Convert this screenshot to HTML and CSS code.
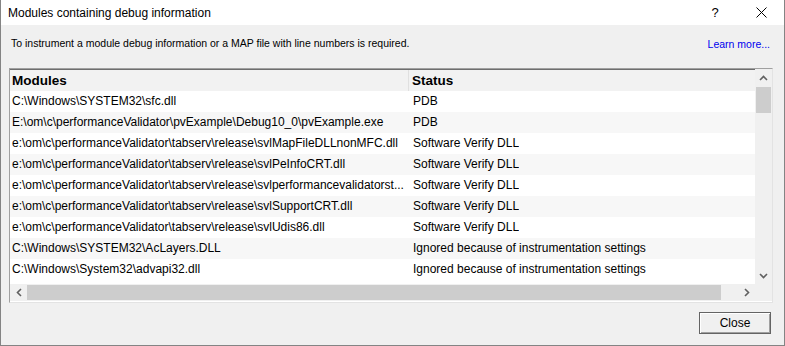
FILE: index.html
```html
<!DOCTYPE html>
<html>
<head>
    <title>Modules containing debug information</title>
    <meta charset="UTF-8">
    <link rel="stylesheet" href="styles.css">
</head>
<body>
    <div class="dialog">
        <div class="titlebar">
            <span class="title">Modules containing debug information</span>
            <div class="caption-buttons">
                <span class="caption-btn">?</span>
                <span class="caption-btn">
                    <svg width="11" height="11" viewBox="0 0 11 11"><path d="M0.5 0.5 L10.5 10.5 M10.5 0.5 L0.5 10.5" stroke="#000" stroke-width="1" fill="none"/></svg>
                </span>
            </div>
        </div>

        <div class="content">
            <div class="intro">
                <span>To instrument a module debug information or a MAP file with line numbers is required.</span>
                <a class="learn-more" href="#">Learn more...</a>
            </div>

            <div class="listview">
                <div class="list-main">
                    <div class="list-header">
                        <div class="cell col-module">Modules</div>
                        <div class="cell col-status">Status</div>
                    </div>
                    <div class="row">
                        <div class="cell col-module">C:\Windows\SYSTEM32\sfc.dll</div>
                        <div class="cell col-status">PDB</div>
                    </div>
                    <div class="row">
                        <div class="cell col-module">E:\om\c\performanceValidator\pvExample\Debug10_0\pvExample.exe</div>
                        <div class="cell col-status">PDB</div>
                    </div>
                    <div class="row">
                        <div class="cell col-module">e:\om\c\performanceValidator\tabserv\release\svlMapFileDLLnonMFC.dll</div>
                        <div class="cell col-status">Software Verify DLL</div>
                    </div>
                    <div class="row">
                        <div class="cell col-module">e:\om\c\performanceValidator\tabserv\release\svlPeInfoCRT.dll</div>
                        <div class="cell col-status">Software Verify DLL</div>
                    </div>
                    <div class="row">
                        <div class="cell col-module">e:\om\c\performanceValidator\tabserv\release\svlperformancevalidatorst...</div>
                        <div class="cell col-status">Software Verify DLL</div>
                    </div>
                    <div class="row">
                        <div class="cell col-module">e:\om\c\performanceValidator\tabserv\release\svlSupportCRT.dll</div>
                        <div class="cell col-status">Software Verify DLL</div>
                    </div>
                    <div class="row">
                        <div class="cell col-module">e:\om\c\performanceValidator\tabserv\release\svlUdis86.dll</div>
                        <div class="cell col-status">Software Verify DLL</div>
                    </div>
                    <div class="row">
                        <div class="cell col-module">C:\Windows\SYSTEM32\AcLayers.DLL</div>
                        <div class="cell col-status">Ignored because of instrumentation settings</div>
                    </div>
                    <div class="row">
                        <div class="cell col-module">C:\Windows\System32\advapi32.dll</div>
                        <div class="cell col-status">Ignored because of instrumentation settings</div>
                    </div>
                </div>

                <div class="vscroll">
                    <span class="arrow">
                        <svg width="9" height="6" viewBox="0 0 9 6"><path d="M1 5 L4.5 1.5 L8 5" stroke="#606060" stroke-width="1.6" fill="none"/></svg>
                    </span>
                    <div class="vtrack"><div class="vthumb"></div></div>
                    <span class="arrow">
                        <svg width="9" height="6" viewBox="0 0 9 6"><path d="M1 1 L4.5 4.5 L8 1" stroke="#606060" stroke-width="1.6" fill="none"/></svg>
                    </span>
                </div>

                <div class="hscroll">
                    <span class="arrow">
                        <svg width="6" height="9" viewBox="0 0 6 9"><path d="M5 1 L1.5 4.5 L5 8" stroke="#606060" stroke-width="1.6" fill="none"/></svg>
                    </span>
                    <div class="htrack"><div class="hthumb"></div></div>
                    <span class="arrow">
                        <svg width="6" height="9" viewBox="0 0 6 9"><path d="M1 1 L4.5 4.5 L1 8" stroke="#606060" stroke-width="1.6" fill="none"/></svg>
                    </span>
                </div>
                <div class="corner"></div>
            </div>

            <div class="footer">
                <button class="btn-close">Close</button>
            </div>
        </div>
    </div>
</body>
</html>
```

FILE: styles.css
```css
html, body {
    margin: 0;
    padding: 0;
}
body {
    font-family: 'Liberation Sans', Arial, sans-serif;
    font-size: 12px;
    color: #000;
    background-color: #f0f0f0;
}
.dialog {
    width: 785px;
    height: 346px;
    box-sizing: border-box;
    border: 1px solid #848484;
    border-top: none;
    background-color: #f0f0f0;
    display: flex;
    flex-direction: column;
}
.titlebar {
    height: 25px;
    background-color: #fff;
    display: flex;
    align-items: center;
    justify-content: space-between;
    padding-left: 7px;
}
.title {
    font-size: 12px;
}
.caption-buttons {
    display: flex;
    height: 100%;
}
.caption-btn {
    width: 46px;
    display: flex;
    align-items: center;
    justify-content: center;
    font-size: 13px;
}
.content {
    padding: 10px 11px 0 8px;
}
.intro {
    display: flex;
    justify-content: space-between;
    line-height: 16px;
    padding: 0 3px 0 2px;
    font-size: 10.5px;
}
.learn-more {
    color: #0000ee;
    text-decoration: none;
    margin-top: 1px;
}
.listview {
    margin-top: 16px;
    width: 764px;
    height: 235px;
    box-sizing: border-box;
    border: 1px solid #a0a0a0;
    border-right-color: #e3e3e3;
    border-bottom-color: #e3e3e3;
    display: grid;
    grid-template-columns: 745px 17px;
    grid-template-rows: 215px 17px;
    background-color: #fff;
}
.list-main {
    overflow: hidden;
    background-color: #fff;
    font-size: 12px;
}
.list-header {
    height: 22px;
    display: flex;
    background-color: #f2f2f2;
    font-weight: bold;
    font-size: 13.5px;
    border-top: 1px solid #6e6e6e;
    box-sizing: border-box;
}
.list-header .cell {
    line-height: 21px;
}
.list-header .col-module {
    border-right: 1px solid #e0e0e0;
}
.row {
    height: 21px;
    display: flex;
    line-height: 21px;
}
.row:nth-child(odd) {
    background-color: #f7f7f7;
}
.cell {
    white-space: nowrap;
    overflow: hidden;
}
.col-module {
    width: 399px;
    padding-left: 2px;
    box-sizing: border-box;
}
.col-status {
    padding-left: 3px;
}
.row .col-module {
    width: 400px;
}
.vscroll {
    background-color: #f0f0f0;
    display: flex;
    flex-direction: column;
}
.vscroll .arrow {
    height: 17px;
    display: flex;
    align-items: center;
    justify-content: center;
}
.vtrack {
    flex: 1;
    padding: 1px;
}
.vthumb {
    height: 26px;
    background-color: #cdcdcd;
}
.hscroll {
    background-color: #f0f0f0;
    display: flex;
}
.hscroll .arrow {
    width: 17px;
    display: flex;
    align-items: center;
    justify-content: center;
}
.htrack {
    flex: 1;
    padding: 1px 0;
}
.hthumb {
    width: 694px;
    height: 100%;
    background-color: #cdcdcd;
}
.corner {
    background-color: #f0f0f0;
}
.footer {
    display: flex;
    justify-content: flex-end;
    margin-top: 9px;
    padding-right: 2px;
}
.btn-close {
    width: 72px;
    height: 22px;
    font-family: 'Liberation Sans', Arial, sans-serif;
    font-size: 12px;
    color: #000;
    background-color: #f0f0f0;
    border: 1px solid #646464;
    box-shadow: inset 1px 1px 0 #fff, inset -1px -1px 0 #a0a0a0;
    padding: 0;
}
```
